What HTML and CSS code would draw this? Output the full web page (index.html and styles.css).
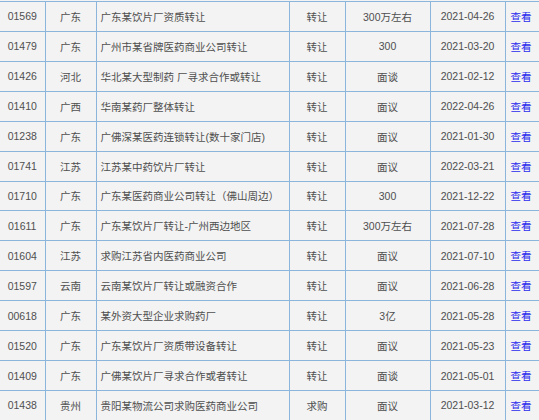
FILE: index.html
```html
<!DOCTYPE html>
<html lang="zh-CN">
<head>
<meta charset="utf-8">
<title>转让信息</title>
<link rel="stylesheet" href="styles.css">
</head>
<body>
<table class="list">
  <colgroup>
    <col class="c-id"><col class="c-area"><col class="c-title"><col class="c-type"><col class="c-price"><col class="c-date"><col class="c-op">
  </colgroup>
  <tbody>
    <tr><td>01569</td><td>广东</td><td class="t">广东某饮片厂资质转让</td><td>转让</td><td>300万左右</td><td>2021-04-26</td><td class="op"><a href="#">查看</a></td></tr>
    <tr><td>01479</td><td>广东</td><td class="t">广州市某省牌医药商业公司转让</td><td>转让</td><td>300</td><td>2021-03-20</td><td class="op"><a href="#">查看</a></td></tr>
    <tr><td>01426</td><td>河北</td><td class="t">华北某大型制药 厂寻求合作或转让</td><td>转让</td><td>面谈</td><td>2021-02-12</td><td class="op"><a href="#">查看</a></td></tr>
    <tr><td>01410</td><td>广西</td><td class="t">华南某药厂整体转让</td><td>转让</td><td>面议</td><td>2022-04-26</td><td class="op"><a href="#">查看</a></td></tr>
    <tr><td>01238</td><td>广东</td><td class="t">广佛深某医药连锁转让(数十家门店)</td><td>转让</td><td>面议</td><td>2021-01-30</td><td class="op"><a href="#">查看</a></td></tr>
    <tr><td>01741</td><td>江苏</td><td class="t">江苏某中药饮片厂转让</td><td>转让</td><td>面议</td><td>2022-03-21</td><td class="op"><a href="#">查看</a></td></tr>
    <tr><td>01710</td><td>广东</td><td class="t">广东某医药商业公司转让（佛山周边）</td><td>转让</td><td>300</td><td>2021-12-22</td><td class="op"><a href="#">查看</a></td></tr>
    <tr><td>01611</td><td>广东</td><td class="t">广东某饮片厂转让-广州西边地区</td><td>转让</td><td>300万左右</td><td>2021-07-28</td><td class="op"><a href="#">查看</a></td></tr>
    <tr><td>01604</td><td>江苏</td><td class="t">求购江苏省内医药商业公司</td><td>转让</td><td>面议</td><td>2021-07-10</td><td class="op"><a href="#">查看</a></td></tr>
    <tr><td>01597</td><td>云南</td><td class="t">云南某饮片厂转让或融资合作</td><td>转让</td><td>面议</td><td>2021-06-28</td><td class="op"><a href="#">查看</a></td></tr>
    <tr><td>00618</td><td>广东</td><td class="t">某外资大型企业求购药厂</td><td>转让</td><td>3亿</td><td>2021-05-28</td><td class="op"><a href="#">查看</a></td></tr>
    <tr><td>01520</td><td>广东</td><td class="t">广东某饮片厂资质带设备转让</td><td>转让</td><td>面议</td><td>2021-05-23</td><td class="op"><a href="#">查看</a></td></tr>
    <tr><td>01409</td><td>广东</td><td class="t">广佛某饮片厂寻求合作或者转让</td><td>转让</td><td>面谈</td><td>2021-05-01</td><td class="op"><a href="#">查看</a></td></tr>
    <tr><td>01438</td><td>贵州</td><td class="t">贵阳某物流公司求购医药商业公司</td><td>求购</td><td>面议</td><td>2021-03-12</td><td class="op"><a href="#">查看</a></td></tr>
  </tbody>
</table>
</body>
</html>
```
FILE: styles.css
```css
html, body {
  margin: 0;
  padding: 0;
  background: #f3f3f3;
  overflow: hidden;
}
body {
  padding-top: 1px;
  font-family: "Liberation Sans", "Noto Sans CJK SC", sans-serif;
  font-size: 10.5px;
  color: #4f4f4f;
}
.list {
  border-collapse: collapse;
  table-layout: fixed;
  width: 545px;
  background: #f3f3f3;
}
.c-id { width: 45px; }
.c-area { width: 51px; }
.c-title { width: 193px; }
.c-type { width: 56px; }
.c-price { width: 85px; }
.c-date { width: 75px; }
.c-op { width: 40px; }
.list tr {
  height: 29.93px;
}
.list td {
  height: auto;
  padding: 0;
  border: 1px solid #8cb5dc;
  text-align: center;
  vertical-align: middle;
  white-space: nowrap;
  overflow: hidden;
}
.list td:first-child {
  border-left: none;
}
.list td.t {
  text-align: left;
  padding-left: 4px;
}
.list td.op {
  text-align: left;
  padding-left: 5px;
}
.list a {
  color: #2b2bee;
  text-decoration: none;
}
```
